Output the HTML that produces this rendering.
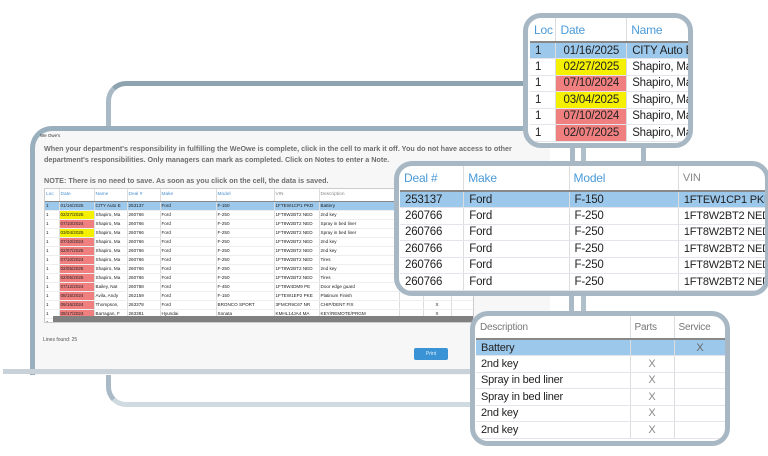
<!DOCTYPE html>
<html><head><meta charset="utf-8"><style>
*{margin:0;padding:0;box-sizing:border-box}
body{width:768px;height:456px;background:#fff;position:relative;overflow:hidden;font-family:"Liberation Sans",sans-serif}
.abs{position:absolute}
.back{left:106px;top:81px;width:480px;height:326px;border:5px solid #98adba;border-radius:20px;border-color:#8ea3b0 #b0c0cb #d0dae1 #a9bac6}
.front{left:30px;top:126px;width:520px;height:249px;border:5px solid #9aafbd;border-right:none;border-bottom:none;border-radius:22px 0 0 0;background:#f7f7f7}
.base{left:3px;top:369px;width:470px;height:5px;background:#c9d2d9}
.sm{font-size:5.3px;color:#333}
table{border-collapse:collapse}
.mini tr{height:8.7px}
.mini td{height:8.7px;line-height:7.5px;font-size:4.6px;padding:0 1px;border-right:1px solid #ddd;border-bottom:1px solid #eee;white-space:nowrap;overflow:hidden;color:#222}
.mini th{font-size:4.8px;line-height:8px;font-weight:normal;color:#4a90d0;text-align:left;height:11px;padding:0 1px;border-right:1px solid #ddd;border-bottom:1.5px solid #888}
.p{background:#8a7aa0}.y{background:#f4f000}.r{background:#f08080}.sel td{background:#9cc8ec}
.pop{background:#fff;border:5px solid #a7b8c4;border-radius:18px;overflow:hidden}
.big td{font-size:11.5px;letter-spacing:-0.2px;color:#222;padding:0 5px;border-right:1px solid #ddd;border-bottom:1.5px solid #e4e4ea;white-space:nowrap;overflow:hidden;line-height:14px}
.big th{font-weight:normal;color:#4a9ad8;text-align:left;padding:0 4px;border-right:1px solid #ddd;border-bottom:2px solid #888;letter-spacing:-0.2px}
.conn{background:#a9bac6}
</style></head><body>
<div class="abs back"></div>
<div class="abs front"></div>
<div class="abs base"></div>
<div class="abs sm" style="left:40px;top:133px;font-size:4.5px">We Owe's</div>
<div class="abs" style="left:44px;top:144px;font-size:7.2px;color:#555;line-height:10.5px;width:498px;font-weight:bold;opacity:.85">When your department's responsibility in fulfilling the WeOwe is complete, click in the cell to mark it off. You do not have access to other department's responsibilities. Only managers can mark as completed. Click on Notes to enter a Note.</div>
<div class="abs" style="left:44px;top:176px;font-size:7.2px;color:#555;font-weight:bold;opacity:.85">NOTE: There is no need to save. As soon as you click on the cell, the data is saved.</div>
<div class="abs" style="left:44px;top:188px;width:430px;height:135px;background:#fff;border:1px solid #ccc;overflow:hidden">
<table class="mini" style="width:520px;table-layout:fixed">
<colgroup><col style="width:14px"><col style="width:35px"><col style="width:33px"><col style="width:33px"><col style="width:56px"><col style="width:58px"><col style="width:45px"><col style="width:80px"><col style="width:24px"><col style="width:28px"><col></colgroup>
<tr style="height:12px"><th>Loc</th><th>Date</th><th>Name</th><th>Deal #</th><th>Make</th><th>Model</th><th style="color:#888">VIN</th><th style="color:#888">Description</th><th></th><th></th><th></th></tr>
<tr class="sel" style="height:9px"><td>1</td><td class="p">01/16/2025</td><td>CITY Auto E</td><td>253137</td><td>Ford</td><td>F-150</td><td>1FTEW1CP1 PKD</td><td>Battery</td><td></td><td></td><td></td></tr>
<tr style="height:9px"><td>1</td><td class="y">02/27/2025</td><td>Shapiro, Ma</td><td>260766</td><td>Ford</td><td>F-250</td><td>1FT8W2BT2 NED</td><td>2nd key</td><td></td><td></td><td></td></tr>
<tr style="height:9px"><td>1</td><td class="r">07/10/2024</td><td>Shapiro, Ma</td><td>260766</td><td>Ford</td><td>F-250</td><td>1FT8W2BT2 NED</td><td>Spray in bed liner</td><td></td><td></td><td></td></tr>
<tr style="height:9px"><td>1</td><td class="y">03/04/2025</td><td>Shapiro, Ma</td><td>260766</td><td>Ford</td><td>F-250</td><td>1FT8W2BT2 NED</td><td>Spray in bed liner</td><td></td><td></td><td></td></tr>
<tr style="height:9px"><td>1</td><td class="r">07/10/2024</td><td>Shapiro, Ma</td><td>260766</td><td>Ford</td><td>F-250</td><td>1FT8W2BT2 NED</td><td>2nd key</td><td></td><td></td><td></td></tr>
<tr style="height:9px"><td>1</td><td class="r">02/07/2025</td><td>Shapiro, Ma</td><td>260766</td><td>Ford</td><td>F-250</td><td>1FT8W2BT2 NED</td><td>2nd key</td><td></td><td></td><td></td></tr>
<tr style="height:9px"><td>1</td><td class="r">07/10/2024</td><td>Shapiro, Ma</td><td>260766</td><td>Ford</td><td>F-250</td><td>1FT8W2BT2 NED</td><td>Tires</td><td></td><td></td><td></td></tr>
<tr style="height:9px"><td>1</td><td class="r">02/05/2025</td><td>Shapiro, Ma</td><td>260766</td><td>Ford</td><td>F-250</td><td>1FT8W2BT2 NED</td><td>2nd key</td><td></td><td></td><td></td></tr>
<tr style="height:9px"><td>1</td><td class="r">02/05/2025</td><td>Shapiro, Ma</td><td>260766</td><td>Ford</td><td>F-250</td><td>1FT8W2BT2 NED</td><td>Tires</td><td></td><td></td><td></td></tr>
<tr style="height:9px"><td>1</td><td class="r">07/12/2024</td><td>Bailey, Nat</td><td>260788</td><td>Ford</td><td>F-450</td><td>1FT8W4DM9 PE</td><td>Door edge guard</td><td></td><td></td><td></td></tr>
<tr style="height:9px"><td>1</td><td class="r">08/15/2024</td><td>Avila, Andy</td><td>262159</td><td>Ford</td><td>F-150</td><td>1FTEW1EP2 PKE</td><td>Platinum Finish</td><td></td><td></td><td></td></tr>
<tr style="height:9px"><td>1</td><td class="r">09/16/2024</td><td>Thompson,</td><td>263378</td><td>Ford</td><td>BRONCO SPORT</td><td>3FMCR9C67 NR</td><td>CHIP/DENT FIX</td><td></td><td style="text-align:center">X</td><td></td></tr>
<tr style="height:9px"><td>1</td><td class="r">09/17/2024</td><td>Barragan, F</td><td>263381</td><td>Hyundai</td><td>Sonata</td><td>KMHL14JA4 MA</td><td>KEY/REMOTE/PRGM</td><td></td><td style="text-align:center">X</td><td></td></tr>
<tr style="height:9px"><td>1</td><td class="r">09/17/2024</td><td>Barragan, F</td><td>263381</td><td>Hyundai</td><td>Sonata</td><td>KMHL14JA4 MA</td><td>WINDOW TINT</td><td></td><td style="text-align:center">X</td><td></td></tr>
</table>
<div class="abs" style="left:8px;bottom:0;width:430px;height:6px;background:#808080"></div>
</div>
<div class="abs sm" style="left:43px;top:337px;font-size:5px;color:#555">Lines found: 25</div>
<div class="abs" style="left:414px;top:348px;width:34px;height:12px;background:#3a93d4;border-radius:2px;color:#dfeefa;font-size:5px;text-align:center;line-height:12px">Print</div>

<div class="abs conn" style="left:570px;top:140px;width:5px;height:28px"></div>
<div class="abs conn" style="left:641px;top:140px;width:5px;height:28px"></div>
<div class="abs conn" style="left:569px;top:290px;width:5px;height:25px"></div>

<div class="abs pop" style="left:523px;top:13px;width:170px;height:135px">
<table class="big" style="table-layout:fixed;width:170px;margin-left:2px">
<colgroup><col style="width:25px"><col style="width:68px"><col style="width:70px"></colgroup>
<tr style="height:24px"><th style="font-size:12px">Loc</th><th style="font-size:12px">Date</th><th style="font-size:12px">Name</th></tr>
<tr class="sel" style="height:16.5px"><td>1</td><td class="p" style="text-align:center;padding:0 2px">01/16/2025</td><td>CITY Auto E</td></tr>
<tr style="height:16.5px"><td>1</td><td class="y" style="text-align:center;padding:0 2px">02/27/2025</td><td>Shapiro, Ma</td></tr>
<tr style="height:16.5px"><td>1</td><td class="r" style="text-align:center;padding:0 2px">07/10/2024</td><td>Shapiro, Ma</td></tr>
<tr style="height:16.5px"><td>1</td><td class="y" style="text-align:center;padding:0 2px">03/04/2025</td><td>Shapiro, Ma</td></tr>
<tr style="height:16.5px"><td>1</td><td class="r" style="text-align:center;padding:0 2px">07/10/2024</td><td>Shapiro, Ma</td></tr>
<tr style="height:16.5px"><td>1</td><td class="r" style="text-align:center;padding:0 2px">02/07/2025</td><td>Shapiro, Ma</td></tr>
</table></div>

<div class="abs pop" style="left:394px;top:161px;width:376px;height:135px">
<table class="big" style="table-layout:fixed;width:370px;margin-left:1px">
<colgroup><col style="width:63px"><col style="width:104px"><col style="width:108px"><col style="width:90px"></colgroup>
<tr style="height:25px"><th style="font-size:12px">Deal #</th><th style="font-size:12px">Make</th><th style="font-size:12px">Model</th><th style="font-size:11px;color:#888">VIN</th></tr>
<tr class="sel" style="height:16.5px"><td>253137</td><td>Ford</td><td>F-150</td><td style="font-size:11px">1FTEW1CP1 PKD</td></tr>
<tr style="height:16.5px"><td>260766</td><td>Ford</td><td>F-250</td><td style="font-size:11px">1FT8W2BT2 NED</td></tr>
<tr style="height:16.5px"><td>260766</td><td>Ford</td><td>F-250</td><td style="font-size:11px">1FT8W2BT2 NED</td></tr>
<tr style="height:16.5px"><td>260766</td><td>Ford</td><td>F-250</td><td style="font-size:11px">1FT8W2BT2 NED</td></tr>
<tr style="height:16.5px"><td>260766</td><td>Ford</td><td>F-250</td><td style="font-size:11px">1FT8W2BT2 NED</td></tr>
<tr style="height:16.5px"><td>260766</td><td>Ford</td><td>F-250</td><td style="font-size:11px">1FT8W2BT2 NED</td></tr>
</table></div>

<div class="abs pop" style="left:470px;top:311px;width:260px;height:135px">
<table class="big" style="table-layout:fixed;width:250px;margin-left:1px">
<colgroup><col style="width:154px"><col style="width:44px"><col style="width:52px"></colgroup>
<tr style="height:23px"><th style="font-size:10px;color:#777">Description</th><th style="font-size:10px;color:#777">Parts</th><th style="font-size:10px;color:#777">Service</th></tr>
<tr class="sel" style="height:16.5px"><td style="font-size:11px">Battery</td><td></td><td style="text-align:center;font-size:11px;color:#666">X</td></tr>
<tr style="height:16.5px"><td style="font-size:11px">2nd key</td><td style="text-align:center;font-size:11px;color:#888">X</td><td></td></tr>
<tr style="height:16.5px"><td style="font-size:11px">Spray in bed liner</td><td style="text-align:center;font-size:11px;color:#888">X</td><td></td></tr>
<tr style="height:16.5px"><td style="font-size:11px">Spray in bed liner</td><td style="text-align:center;font-size:11px;color:#888">X</td><td></td></tr>
<tr style="height:16.5px"><td style="font-size:11px">2nd key</td><td style="text-align:center;font-size:11px;color:#888">X</td><td></td></tr>
<tr style="height:16.5px"><td style="font-size:11px">2nd key</td><td style="text-align:center;font-size:11px;color:#888">X</td><td></td></tr>
</table></div>
</body></html>
